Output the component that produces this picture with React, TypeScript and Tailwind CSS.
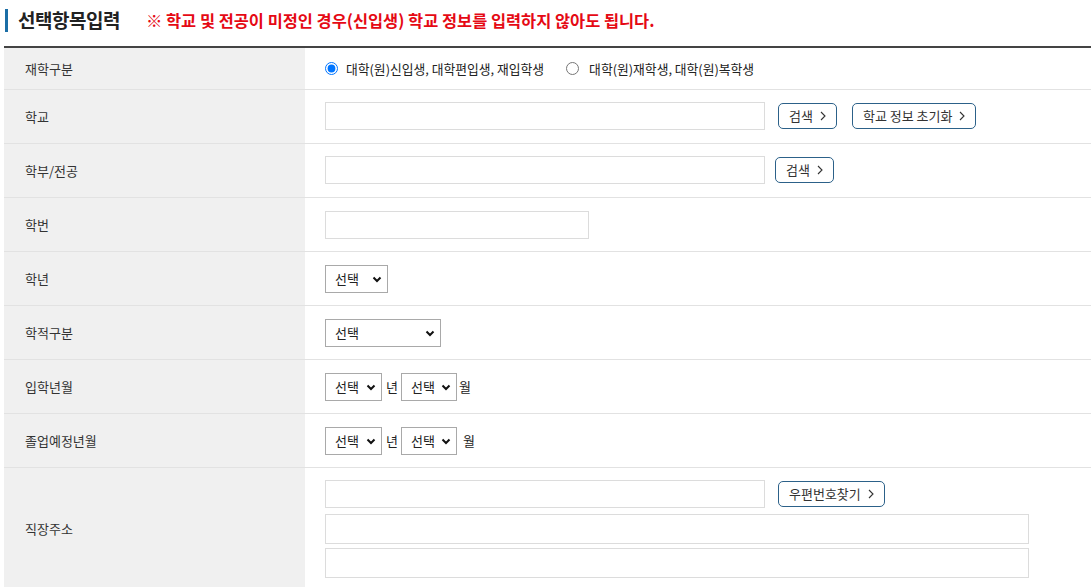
import type { ReactNode } from 'react'

const font = { fontFamily: '"Noto Sans CJK KR", "Noto Sans", sans-serif' }

function Chevron() {
  return (
    <svg width="6" height="10" viewBox="0 0 6 10" className="ml-[7px]">
      <polyline points="1,1 5,5 1,9" fill="none" stroke="#333" strokeWidth="1.1" />
    </svg>
  )
}

function Btn({ children, className = '' }: { children: ReactNode; className?: string }) {
  return (
    <button
      type="button"
      className={`h-[26px] px-[10px] border border-[#2c6189] rounded-[5px] bg-white text-[13px] text-[#333] flex items-center shrink-0 ${className}`}
    >
      {children}
      <Chevron />
    </button>
  )
}

function Select({ w }: { w: string }) {
  return (
    <div className={`relative h-[28px] ${w} shrink-0`}>
      <select className="appearance-none w-full h-full border border-[#a9a9a9] bg-white pl-[9px] text-[13px] text-[#222] outline-none">
        <option>선택</option>
      </select>
      <svg width="10" height="7" viewBox="0 0 10 7" className="absolute right-[6px] top-[11px] pointer-events-none">
        <polyline points="1.5,1.5 5,5 8.5,1.5" fill="none" stroke="#111" strokeWidth="2" />
      </svg>
    </div>
  )
}

function Row({ label, children, h = 'h-[54px]' }: { label: string; children: ReactNode; h?: string }) {
  return (
    <div className={`flex border-b border-[#e2e2e2] ${h}`}>
      <div className="w-[301px] shrink-0 bg-[#f0f0f0] pl-[21px] flex items-center text-[13px] text-[#333]">{label}</div>
      <div className="flex-1 pl-[20px] flex items-center">{children}</div>
    </div>
  )
}

const input = 'border border-[#dcdcdc] bg-white outline-none shrink-0'

export default function App() {
  return (
    <div className="bg-white w-[1091px] h-[587px] overflow-hidden pl-[4px]" style={font}>
      <div className="h-[46px] flex items-center">
        <div className="w-[3px] h-[23px] bg-[#1b6ea6] ml-[1px] mt-[-6px]" />
        <h2 className="ml-[10px] mt-[-6px] text-[19px] font-bold text-[#222] tracking-[-0.5px]">선택항목입력</h2>
        <p className="ml-[26px] mt-[-6px] text-[16.4px] font-bold text-[#e50914]">
          ※ 학교 및 전공이 미정인 경우(신입생) 학교 정보를 입력하지 않아도 됩니다.
        </p>
      </div>
      <div className="border-t-2 border-[#444]">
        <Row label="재학구분" h="h-[42px]">
          <label className="flex items-center text-[12.8px] text-[#222]">
            <input type="radio" name="s" defaultChecked className="m-0 w-[13px] h-[13px]" />
            <span className="ml-[8px]">대학(원)신입생, 대학편입생, 재입학생</span>
          </label>
          <label className="flex items-center ml-[22px] text-[12.8px] text-[#222]">
            <input type="radio" name="s" className="m-0 w-[13px] h-[13px]" />
            <span className="ml-[10px]">대학(원)재학생, 대학(원)복학생</span>
          </label>
        </Row>
        <Row label="학교">
          <input className={`${input} h-[28px] w-[440px] mt-[-2px]`} />
          <Btn className="ml-[13px] mt-[-2px]">검색</Btn>
          <Btn className="ml-[15px] mt-[-2px]">학교 정보 초기화</Btn>
        </Row>
        <Row label="학부/전공">
          <input className={`${input} h-[28px] w-[440px] mt-[-2px]`} />
          <Btn className="ml-[10px] mt-[-2px]">검색</Btn>
        </Row>
        <Row label="학번">
          <input className={`${input} h-[28px] w-[264px]`} />
        </Row>
        <Row label="학년">
          <Select w="w-[63px]" />
        </Row>
        <Row label="학적구분">
          <Select w="w-[116px]" />
        </Row>
        <Row label="입학년월">
          <Select w="w-[57px]" />
          <span className="ml-[4px] mr-[3px] text-[13px] text-[#222]">년</span>
          <Select w="w-[56px]" />
          <span className="ml-[2px] text-[13px] text-[#222]">월</span>
        </Row>
        <Row label="졸업예정년월">
          <Select w="w-[57px]" />
          <span className="ml-[4px] mr-[3px] text-[13px] text-[#222]">년</span>
          <Select w="w-[56px]" />
          <span className="ml-[6px] text-[13px] text-[#222]">월</span>
        </Row>
        <div className="flex h-[130px]">
          <div className="w-[301px] shrink-0 bg-[#f0f0f0] pl-[21px] pt-[51px] text-[13px] text-[#333]">직장주소</div>
          <div className="flex-1 pl-[20px] pt-[12px] flex flex-col">
            <div className="flex items-center">
              <input className={`${input} h-[28px] w-[440px]`} />
              <Btn className="ml-[13px]">우편번호찾기</Btn>
            </div>
            <input className={`${input} w-[704px] h-[30px] mt-[6px]`} />
            <input className={`${input} w-[704px] h-[30px] mt-[4px]`} />
          </div>
        </div>
      </div>
    </div>
  )
}
